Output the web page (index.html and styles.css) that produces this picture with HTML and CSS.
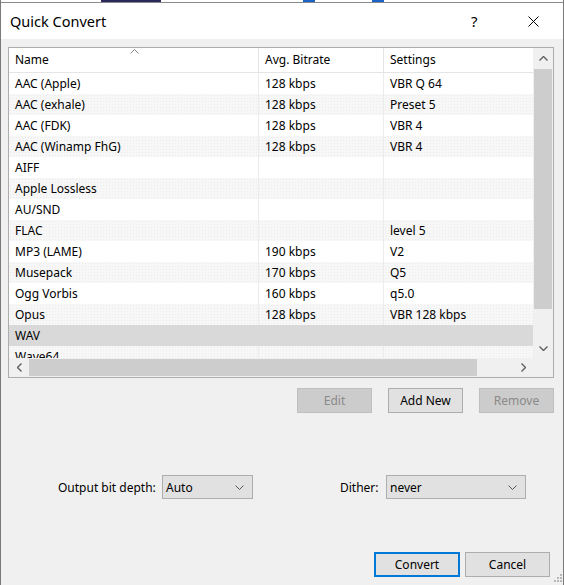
FILE: index.html
```html
<!DOCTYPE html>
<html lang="en">
<head>
  <meta charset="UTF-8" />
  <title>Quick Convert</title>
  <link rel="stylesheet" href="styles.css">
</head>
<body>
  <div class="window">
    <div class="topstrip">
      <span class="mark m1"></span><span class="mark m2"></span><span class="mark m3"></span>
    </div>

    <!-- Title bar -->
    <div class="titlebar">
      <span class="title">Quick Convert</span>
      <span class="help">?</span>
      <span class="close">
        <svg width="11" height="11" viewBox="0 0 11 11"><path d="M0.5 0.5 L10.5 10.5 M10.5 0.5 L0.5 10.5" stroke="#000" stroke-width="1" fill="none"/></svg>
      </span>
    </div>

    <div class="client">
      <!-- Format list -->
      <div class="listview">
        <div class="list-main">
          <div class="list-header">
            <div class="col col-name">Name
              <svg class="sort" width="9" height="5" viewBox="0 0 9 5"><path d="M0.5 4.5 L4.5 0.5 L8.5 4.5" stroke="#888" fill="none"/></svg>
            </div>
            <div class="col col-rate">Avg. Bitrate</div>
            <div class="col col-set">Settings</div>
          </div>
          <div class="rows">
            <div class="row"><div class="col col-name">AAC (Apple)</div><div class="col col-rate">128 kbps</div><div class="col col-set">VBR Q 64</div></div>
            <div class="row alt"><div class="col col-name">AAC (exhale)</div><div class="col col-rate">128 kbps</div><div class="col col-set">Preset 5</div></div>
            <div class="row"><div class="col col-name">AAC (FDK)</div><div class="col col-rate">128 kbps</div><div class="col col-set">VBR 4</div></div>
            <div class="row alt"><div class="col col-name">AAC (Winamp FhG)</div><div class="col col-rate">128 kbps</div><div class="col col-set">VBR 4</div></div>
            <div class="row"><div class="col col-name">AIFF</div><div class="col col-rate"></div><div class="col col-set"></div></div>
            <div class="row alt"><div class="col col-name">Apple Lossless</div><div class="col col-rate"></div><div class="col col-set"></div></div>
            <div class="row"><div class="col col-name">AU/SND</div><div class="col col-rate"></div><div class="col col-set"></div></div>
            <div class="row alt"><div class="col col-name">FLAC</div><div class="col col-rate"></div><div class="col col-set">level 5</div></div>
            <div class="row"><div class="col col-name">MP3 (LAME)</div><div class="col col-rate">190 kbps</div><div class="col col-set">V2</div></div>
            <div class="row alt"><div class="col col-name">Musepack</div><div class="col col-rate">170 kbps</div><div class="col col-set">Q5</div></div>
            <div class="row"><div class="col col-name">Ogg Vorbis</div><div class="col col-rate">160 kbps</div><div class="col col-set">q5.0</div></div>
            <div class="row alt"><div class="col col-name">Opus</div><div class="col col-rate">128 kbps</div><div class="col col-set">VBR 128 kbps</div></div>
            <div class="row selected"><div class="col col-name">WAV</div><div class="col col-rate"></div><div class="col col-set"></div></div>
            <div class="row alt"><div class="col col-name">Wave64</div><div class="col col-rate"></div><div class="col col-set"></div></div>
          </div>
        </div>

        <div class="vscroll">
          <div class="sb-btn">
            <svg width="9" height="5" viewBox="0 0 9 5"><path d="M0.5 4.5 L4.5 0.5 L8.5 4.5" stroke="#606060" stroke-width="1.4" fill="none"/></svg>
          </div>
          <div class="v-thumb"></div>
          <div class="v-track"></div>
          <div class="sb-btn">
            <svg width="9" height="5" viewBox="0 0 9 5"><path d="M0.5 0.5 L4.5 4.5 L8.5 0.5" stroke="#606060" stroke-width="1.4" fill="none"/></svg>
          </div>
        </div>

        <div class="hscroll">
          <div class="sb-btn">
            <svg width="5" height="9" viewBox="0 0 5 9"><path d="M4.5 0.5 L0.5 4.5 L4.5 8.5" stroke="#606060" stroke-width="1.4" fill="none"/></svg>
          </div>
          <div class="h-thumb"></div>
          <div class="h-track"></div>
          <div class="sb-btn">
            <svg width="5" height="9" viewBox="0 0 5 9"><path d="M0.5 0.5 L4.5 4.5 L0.5 8.5" stroke="#606060" stroke-width="1.4" fill="none"/></svg>
          </div>
        </div>
        <div class="corner"></div>
      </div>

      <!-- List actions -->
      <div class="actions">
        <button class="btn" disabled>Edit</button>
        <button class="btn">Add New</button>
        <button class="btn" disabled>Remove</button>
      </div>

      <!-- Options -->
      <div class="options">
        <div class="field field-depth">
          <span class="label">Output bit depth:</span>
          <div class="combo combo-depth"><span>Auto</span>
            <svg width="9" height="5" viewBox="0 0 9 5"><path d="M0.5 0.5 L4.5 4.5 L8.5 0.5" stroke="#555" fill="none"/></svg>
          </div>
        </div>
        <div class="field field-dither">
          <span class="label">Dither:</span>
          <div class="combo combo-dither"><span>never</span>
            <svg width="9" height="5" viewBox="0 0 9 5"><path d="M0.5 0.5 L4.5 4.5 L8.5 0.5" stroke="#555" fill="none"/></svg>
          </div>
        </div>
      </div>

      <!-- Dialog buttons -->
      <div class="footer">
        <button class="btn btn-default">Convert</button>
        <button class="btn btn-cancel">Cancel</button>
      </div>
    </div>

    <svg class="grip" width="9" height="9" viewBox="0 0 9 9">
      <rect x="7" y="1" width="2" height="2" fill="#b8b8b8"/>
      <rect x="4" y="4" width="2" height="2" fill="#b8b8b8"/>
      <rect x="7" y="4" width="2" height="2" fill="#b8b8b8"/>
      <rect x="1" y="7" width="2" height="2" fill="#b8b8b8"/>
      <rect x="4" y="7" width="2" height="2" fill="#b8b8b8"/>
      <rect x="7" y="7" width="2" height="2" fill="#b8b8b8"/>
    </svg>
  </div>
</body>
</html>
```

FILE: styles.css
```css
* { box-sizing: border-box; }
body {
  margin: 0;
  background: #f0f0f0;
  font-family: 'Noto Sans', 'Segoe UI', sans-serif;
  font-size: 12px;
  color: #000;
}

.window {
  position: relative;
  width: 564px;
  height: 585px;
  border-left: 1px solid #7a7a7a;
  border-right: 1px solid #7a7a7a;
  background: #f0f0f0;
}

.topstrip {
  position: relative;
  height: 3px;
  background: #fff;
  border-bottom: 1px solid #8a8a8a;
}
.mark {
  position: absolute;
  top: 0;
  height: 2px;
}
.m1 { left: 100px; width: 60px; background: #2a2a5a; }
.m2 { left: 302px; width: 12px; background: #1a64c8; }
.m3 { left: 371px; width: 12px; background: #1a64c8; }

.titlebar {
  display: flex;
  align-items: center;
  height: 36px;
  background: #fff;
  padding-left: 9px;
}
.title {
  font-size: 14.5px;
  flex: 1;
}
.help {
  font-size: 15px;
  width: 57px;
}
.close {
  width: 35px;
  display: flex;
}

.client {
  padding: 8px 8px 0 7px;
}

/* list view */
.listview {
  width: 546px;
  height: 331px;
  border: 1px solid #adadad;
  background: #fff;
  display: grid;
  grid-template-columns: 524px 20px;
  grid-template-rows: 310px 19px;
}
.list-main {
  overflow: hidden;
}
.list-header {
  display: flex;
  height: 25px;
  border-bottom: 1px solid #e5e5e5;
}
.list-header .col {
  line-height: 24px;
  position: relative;
}
.sort {
  position: absolute;
  left: 121px;
  top: 1px;
}
.col {
  flex: none;
  padding-left: 6px;
  white-space: nowrap;
  overflow: hidden;
}
.col-name { width: 250px; border-right: 1px solid #e5e5e5; }
.col-rate { width: 125px; border-right: 1px solid #e5e5e5; }
.col-set { width: 160px; }

.row {
  display: flex;
  height: 21px;
  line-height: 21px;
}
.row .col-name, .row .col-rate { border-right-color: #ececec; }
.row.alt {
  background-color: #f7f7f7;
  background-image: radial-gradient(#ececec 0.6px, transparent 0.7px);
  background-size: 3px 3px;
}
.row.selected {
  background: #d9d9d9;
}
.row.selected .col { border-right-color: #d9d9d9; }

.vscroll, .hscroll {
  background: #f0f0f0;
  display: flex;
}
.vscroll { flex-direction: column; }
.sb-btn {
  flex: none;
  width: 20px;
  height: 20px;
  display: flex;
  align-items: center;
  justify-content: center;
}
.hscroll .sb-btn { height: 19px; }
.v-thumb {
  height: 240px;
  margin: 1px 1px 0 1px;
  background: #cdcdcd;
}
.v-track { flex: 1; }
.h-thumb {
  width: 448px;
  margin: 1px 0 0 0;
  height: 17px;
  background: #cdcdcd;
}
.h-track { flex: 1; }
.corner { background: #f0f0f0; }

/* buttons */
.btn {
  font-family: inherit;
  font-size: 12px;
  height: 25px;
  width: 75px;
  padding: 0;
  background: #e1e1e1;
  border: 1px solid #adadad;
  color: #000;
}
.btn:disabled {
  background: #cccccc;
  border-color: #bfbfbf;
  color: #8a8a8a;
}

.actions {
  display: flex;
  justify-content: flex-end;
  gap: 16px;
  margin-top: 10px;
  width: 546px;
}

.options {
  display: flex;
  margin-top: 62px;
  padding-left: 50px;
  height: 24px;
}
.field {
  display: flex;
  align-items: center;
  justify-content: space-between;
}
.label { white-space: nowrap; }
.field-depth { width: 195px; }
.field-dither { width: 186px; margin-left: 87px; }
.combo {
  height: 24px;
  background: #e1e1e1;
  border: 1px solid #adadad;
  display: flex;
  align-items: center;
  justify-content: space-between;
  padding: 0 8px 0 3px;
}
.combo-depth { width: 91px; }
.combo-dither { width: 140px; }

.footer {
  display: flex;
  gap: 5px;
  justify-content: flex-end;
  margin-top: 53px;
  padding-right: 5px;
}
.btn-default {
  width: 86px;
  border: 2px solid #0078d7;
}
.btn-cancel { width: 85px; }

.grip {
  position: absolute;
  right: 1px;
  bottom: 3px;
}
```
